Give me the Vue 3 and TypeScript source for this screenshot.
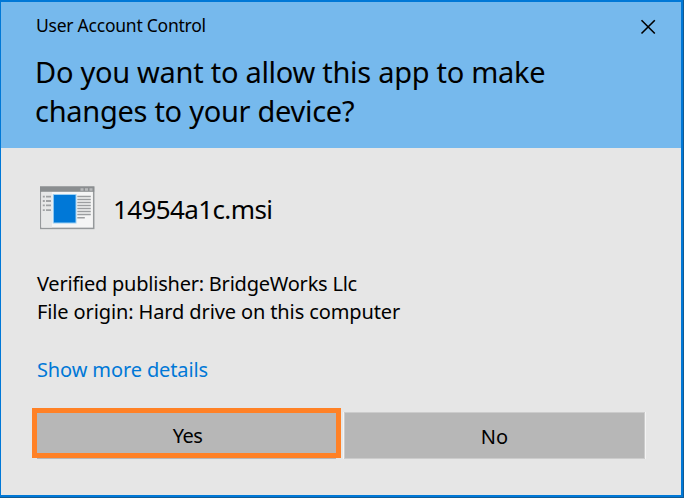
<script setup lang="ts">
const details: { label: string; value: string }[] = [
  { label: 'Verified publisher:', value: 'BridgeWorks Llc' },
  { label: 'File origin:', value: 'Hard drive on this computer' },
]
</script>

<template>
  <div class="frame">
    <main class="dialog">
      <header class="header">
        <div class="titlebar">
          <span class="title">User Account Control</span>
          <button class="close" aria-label="Close">
            <svg width="16" height="16" viewBox="0 0 16 16"><path d="M1.500 1.200 14.800 14.500M14.800 1.200 1.500 14.500" stroke="#000" stroke-width="1.600" fill="none" /></svg>
          </button>
        </div>
        <h1 class="question">Do you want to allow this app to make<br>changes to your device?</h1>
      </header>
      <section class="body">
        <div class="program">
          <svg class="icon" width="56" height="44" viewBox="0 0 56 44">
            <rect x=".5" y=".9" width="53.200" height="41.500" fill="#f5f5f5" stroke="#96999b" stroke-width="1.500" />
            <rect x="0" y="1" width="54.200" height="4.800" fill="#8b8e90" />
            <path d="M40.500 3.500h3M45 3.500h3M49.500 3.500h3" stroke="#b9bbbc" stroke-width="2.400" />
            <rect x="1.500" y="6" width="10.500" height="35.500" fill="#e7e8e8" />
            <path d="M2.800 10.600h2M2.800 15h2M2.800 19.400h2M2.800 24.200h2M6 10.600h5M6 15h5M6 19.400h5M6 24.200h5" stroke="#a0a2a4" stroke-width="1.800" />
            <rect x="13.300" y="8.500" width="22.700" height="28.500" fill="#0078d7" stroke="#9bd0f4" />
            <path d="M37.300 10.500h13.500M37.300 13.500h13.500M37.300 16.500h13.500M37.300 19.500h13.500M37.300 22.500h13.500M37.300 25.500h13.500M37.300 28.500h13.500M37.300 31.700h7.500" stroke="#9c9ea0" stroke-width="1.400" />
          </svg>
          <span class="filename">14954a1c.msi</span>
        </div>
        <div class="details">
          <p v-for="(item, i) in details" :key="item.label" :class="'detail-' + i">{{ item.label }} {{ item.value }}</p>
        </div>
        <a class="more">Show more details</a>
        <div class="actions">
          <button class="action yes"><span class="yes-label">Yes</span></button>
          <button class="action no">No</button>
        </div>
      </section>
    </main>
  </div>
</template>

<style>
body { margin: 0; overflow: hidden; }
</style>

<style scoped>
.frame {
  box-sizing: border-box;
  width: 684px;
  height: 498px;
  background: #125a92;
  padding: 0 1px 1px 0;
}
.dialog {
  box-sizing: border-box;
  height: 497px;
  border: solid #0078d7;
  border-width: 2px 2px 2px 1px;
  background: #e6e6e6;
  color: #000;
  font-family: "Noto Sans", "Open Sans", sans-serif;
  display: flex;
  flex-direction: column;
}
.header { height: 146px; background: #76b9ed; box-sizing: border-box; padding-left: 34px; }
.titlebar { display: flex; justify-content: space-between; height: 48px; padding-left: 1px; }
.title { font-size: 17.500px; letter-spacing: -.24px; line-height: 24px; padding-top: 11px; white-space: nowrap; }
.close { border: 0; background: none; padding: 17px 25px 0 0; height: 33px; line-height: 0; }
.question { margin: 2px 0 0; font-size: 29px; letter-spacing: -.28px; font-weight: 400; line-height: 39px; white-space: nowrap; }
.body { padding: 38px 0 0 36px; display: flex; flex-direction: column; align-items: flex-start; }
.program { display: flex; align-items: center; height: 44px; padding-left: 3px; }
.filename { font-size: 26px; letter-spacing: -.62px; line-height: 40px; margin-left: 17px; padding-top: 2px; }
.details { margin-top: 40px; font-size: 20px; line-height: 28px; white-space: nowrap; }
.details p { margin: 0; }
.detail-0 { letter-spacing: -.23px; }
.detail-1 { letter-spacing: -.12px; }
.more { margin-top: 30px; color: #0078d7; font-size: 20px; letter-spacing: -.12px; line-height: 28px; white-space: nowrap; }
.actions { display: flex; align-items: flex-start; margin: 24px 0 0 -5px; }
.action { box-sizing: border-box; border-radius: 0; margin: 0; font: 20px/28px "Noto Sans", "Open Sans", sans-serif; color: #000; background: #b7b7b7; }
.yes { display: flex; justify-content: center; align-items: flex-start; width: 309px; height: 50px; border: 5px solid #ff8126; padding: 9px 0 0 2px; letter-spacing: -.6px; box-shadow: 0 6px 0 -5px #b7b7b7; }
.yes-label { display: block; height: 28px; }
.no { width: 301px; height: 47px; margin: 4px 0 0 3px; padding: 2px 0 0; border: 1px solid #cccccc; box-shadow: -1px 0 #f4f4f4, 1px 0 #f4f4f4; }
</style>
